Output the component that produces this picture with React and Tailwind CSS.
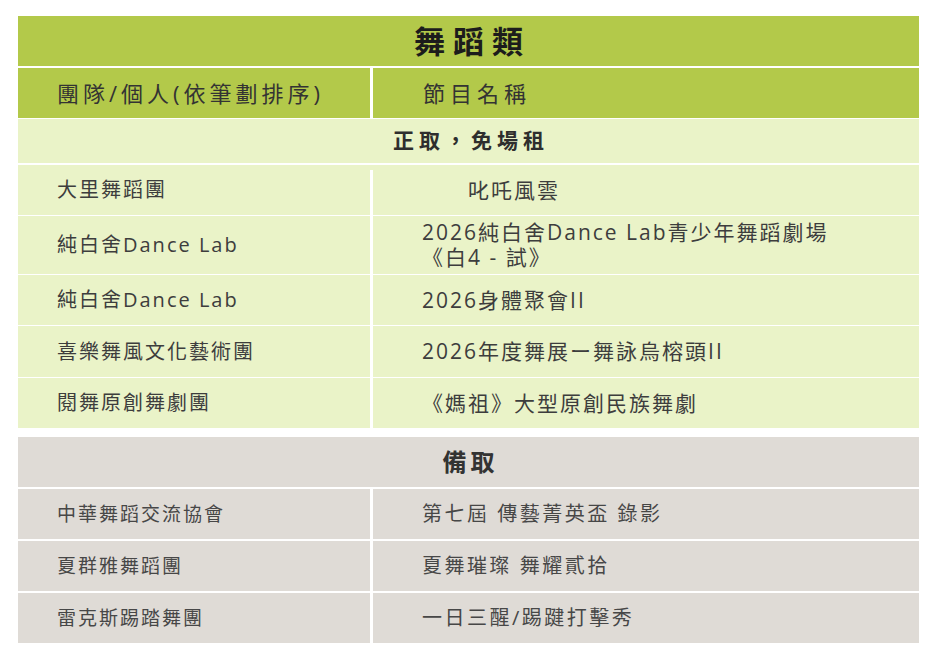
import React from "react";

const accepted = [
  { team: "大里舞蹈團", show: ["叱吒風雲"], indent: true, h: "h-[50px]", late: true },
  { team: "純白舍Dance Lab", show: ["2026純白舍Dance Lab青少年舞蹈劇場", "《白4 - 試》"], h: "h-[58px]" },
  { team: "純白舍Dance Lab", show: ["2026身體聚會II"], h: "h-[50px]" },
  { team: "喜樂舞風文化藝術團", show: ["2026年度舞展ー舞詠烏榕頭II"], h: "h-[51px]" },
  { team: "閱舞原創舞劇團", show: ["《媽祖》大型原創民族舞劇"], h: "h-[50px]" },
];

const waiting = [
  { team: "中華舞蹈交流協會", show: "第七屆 傳藝菁英盃 錄影" },
  { team: "夏群雅舞蹈團", show: "夏舞璀璨 舞耀貳拾" },
  { team: "雷克斯踢踏舞團", show: "一日三醒/踢踺打擊秀" },
];

export default function App() {
  return (
    <div className="min-h-screen bg-white pt-[16px] pl-[18px] font-['Open_Sans','Noto_Sans_CJK_TC',sans-serif]">
      <div className="w-[901px] flex flex-col">
        {/* title */}
        <div className="h-[50px] bg-[#b3c94a] flex items-center justify-center">
          <span className="text-[31px] font-bold tracking-[8px] pl-[8px] text-[#1c1c1c]">舞蹈類</span>
        </div>

        {/* column heads */}
        <div className="mt-[2px] h-[50px] bg-[#b3c94a] flex text-[22px] text-[#333]">
          <div className="w-[352px] flex items-center pl-[39px] tracking-[4px]">團隊/個人(依筆劃排序)</div>
          <div className="w-[3px] bg-white" />
          <div className="flex-1 flex items-center pl-[50px] tracking-[5px]">節目名稱</div>
        </div>

        {/* 正取 */}
        <div className="mt-[1px] h-[44px] bg-[#eaf3c8] flex items-center justify-center">
          <span className="text-[21px] font-bold tracking-[5px] pl-[5px] text-[#2e2e2e]">正取，免場租</span>
        </div>

        {accepted.map((r, i) => (
          <div
            key={i}
            className={`${i === 0 ? "mt-[2px]" : "mt-[1px]"} ${r.h} bg-[#eaf3c8] flex tracking-[2px] text-[#3d3d3d]`}
          >
            <div className="w-[352px] flex items-center pl-[39px] text-[20px]">{r.team}</div>
            <div className={`w-[3px] bg-white ${r.late ? "mt-[5px]" : ""}`} />
            <div className={`flex-1 flex flex-col justify-center text-[21px] leading-[25px] ${r.indent ? "pl-[95px]" : "pl-[49px]"}`}>
              {r.show.map((s, j) => (
                <span key={j}>{s}</span>
              ))}
            </div>
          </div>
        ))}

        {/* 備取 */}
        <div className="mt-[9px] h-[50px] bg-[#dfdbd6] flex items-center justify-center">
          <span className="text-[24px] font-bold tracking-[4px] pl-[4px] text-[#333]">備取</span>
        </div>

        {waiting.map((r, i) => (
          <div key={i} className="mt-[2px] h-[50px] bg-[#dfdbd6] flex text-[#474747]">
            <div className="w-[352px] flex items-center pl-[39px] text-[19px] tracking-[2px]">{r.team}</div>
            <div className="w-[3px] bg-white" />
            <div className="flex-1 flex items-center pl-[49px] text-[20px] tracking-[2.5px]">{r.show}</div>
          </div>
        ))}
      </div>
    </div>
  );
}
